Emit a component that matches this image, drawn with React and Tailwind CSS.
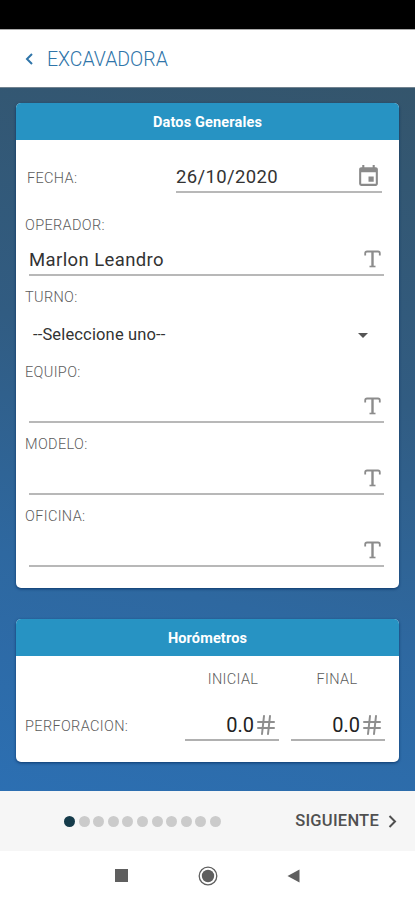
import { Hash } from 'lucide-react';
import { MdEvent, MdArrowDropDown } from 'react-icons/md';

const STEPS = 11;

function Card({ title, className, children }) {
  return (
    <section
      className={`rounded-[5px] bg-white shadow-[0_1px_3px_rgba(0,40,90,0.75)] ${className}`}
    >
      <h2 className="flex h-[37px] items-center justify-center rounded-t-[5px] bg-[#2793c3] pt-[3px] text-[14.5px] font-bold tracking-[0.15px] text-white">
        {title}
      </h2>
      {children}
    </section>
  );
}

function Label({ children, className = '' }) {
  return (
    <span
      className={`block pt-[1px] text-[14.5px] font-light leading-[19px] tracking-[0.35px] text-[#5c5c5c] ${className}`}
    >
      {children}
    </span>
  );
}

function TextIcon() {
  return (
    <svg
      className="mr-[3px] mb-[4px] h-[18px] w-[17px] text-[#8c8c8c]"
      viewBox="0 0 17 18"
      fill="none"
      stroke="currentColor"
    >
      <path d="M1.200 5.500V3.200Q1.200 1.500 3 1.500H14Q15.800 1.500 15.800 3.200V5.500" strokeWidth="1.800" />
      <path d="M8.500 1.500V16.500" strokeWidth="2.400" />
      <path d="M5.500 16.500H11.500" strokeWidth="1.600" />
    </svg>
  );
}

function TextField({ label, value }) {
  return (
    <div className="mb-3">
      <Label>{label}</Label>
      <div className="mr-[6px] ml-[4px] flex h-[41px] -mb-px items-center justify-between border-b-2 border-[#b8b8b8] pt-[12px]">
        <span className="pt-[1px] text-[18.5px] tracking-[0.4px] text-[#333]">{value}</span>
        <TextIcon />
      </div>
    </div>
  );
}

function NumberField({ value, className }) {
  return (
    <div
      className={`flex h-[31px] w-[94px] items-center justify-end border-b-2 border-[#b0b0b0] pr-[1px] ${className}`}
    >
      <span className="text-[20px] text-[#222]">{value}</span>
      <Hash className="size-[24px] text-[#8f8f8f]" strokeWidth={2} />
    </div>
  );
}

export default function App() {
  return (
    <div className="flex h-[900px] w-[415px] flex-col overflow-hidden bg-white font-['Roboto',sans-serif]">
      <div className="h-[29px] shrink-0 bg-black" />

      <header className="flex h-[58px] shrink-0 items-center border-t border-[#aaa] pl-[25px] text-[#2f75a9]">
        <svg className="h-[12px] w-[8px]" viewBox="0 0 8 12" fill="none" stroke="currentColor" strokeWidth="2">
          <path d="M7 1 2 6l5 5" />
        </svg>
        <h1 className="mt-[3px] ml-[14px] text-[19.5px] font-light">EXCAVADORA</h1>
      </header>

      <main className="h-[704px] shrink-0 border-t border-[#71828f] bg-[linear-gradient(193deg,#34556c_0%,#315c82_40%,#2e68a0_70%,#2c6fb2_100%)] px-4 pt-[15px]">
        <Card title="Datos Generales" className="h-[485px]">
          <div className="pr-[9px] pl-[9px]">
            <div className="mb-[22px] flex h-[53px] items-end justify-between pr-[8px] pl-[2px]">
              <Label className="pb-[5px]">FECHA:</Label>
              <div className="flex h-[32px] w-[206px] items-center justify-between border-b-2 border-[#b8b8b8]">
                <span className="pt-[4px] text-[18.5px] tracking-[0.35px] text-[#333]">26/10/2020</span>
                <MdEvent className="mr-[1px] size-[25px] text-[#8a8a8a]" />
              </div>
            </div>
            <TextField label="OPERADOR:" value="Marlon Leandro" />
            <Label>TURNO:</Label>
            <div className="flex h-[55px] items-center justify-between pr-[15px] pl-[8px]">
              <span className="pt-[1px] text-[16.5px] tracking-[0.15px] text-[#333]">--Seleccione uno--</span>
              <MdArrowDropDown className="size-[24px] text-[#555]" />
            </div>
            <TextField label="EQUIPO:" />
            <TextField label="MODELO:" />
            <TextField label="OFICINA:" />
          </div>
        </Card>

        <Card title="Horómetros" className="mt-[31px] h-[143px]">
          <div className="flex pt-[13px] text-center">
            <Label className="ml-[170px] w-[94px]">INICIAL</Label>
            <Label className="ml-[10px] w-[94px]">FINAL</Label>
          </div>
          <div className="flex pt-[21px] pl-[9px]">
            <Label className="w-[160px] pt-[7px]">PERFORACION:</Label>
            <NumberField value="0.0" />
            <NumberField value="0.0" className="ml-3" />
          </div>
        </Card>
      </main>

      <footer className="flex h-[60px] shrink-0 items-center justify-between bg-[#f6f6f6] pr-[18px] pl-[64px]">
        <div className="flex gap-[3.6px]">
          {Array.from({ length: STEPS }, (_, i) => (
            <span
              key={i}
              className={`size-[11px] rounded-full ${i === 0 ? 'bg-[#153b4a]' : 'bg-[#cbcbcb]'}`}
            />
          ))}
        </div>
        <button className="flex items-center gap-[9px] text-[16.5px] font-medium tracking-[0.25px] text-[#505050]">
          <span className="pt-[1px]">SIGUIENTE</span>
          <svg className="h-[13px] w-[9px]" viewBox="0 0 9 13" fill="none" stroke="currentColor" strokeWidth="2">
            <path d="m1.5 1 5.500 5.500L1.500 12" />
          </svg>
        </button>
      </footer>

      {/* Android system buttons */}
      <nav className="flex h-[49px] shrink-0 items-center justify-between pr-[115px] pl-[115px] text-[#5f5f5f]">
        <span className="size-[13px] bg-current" />
        <svg className="size-[20px]" viewBox="0 0 20 20">
          <circle cx="10" cy="10" r="8.8" fill="none" stroke="currentColor" strokeWidth="1.3" />
          <circle cx="10" cy="10" r="6.2" fill="currentColor" />
        </svg>
        <svg className="h-[14px] w-[13px]" viewBox="0 0 13 14">
          <path d="M12.500.5v13L.500 7z" fill="currentColor" />
        </svg>
      </nav>
    </div>
  );
}
